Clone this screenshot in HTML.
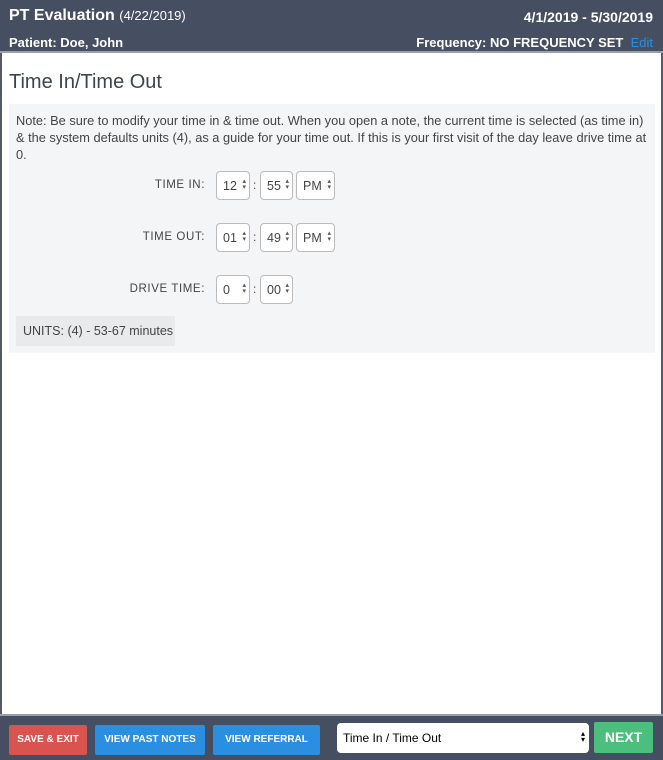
<!DOCTYPE html>
<html><head><style>
*{box-sizing:border-box;margin:0;padding:0}
body{width:663px;height:760px;overflow:hidden;background:#fff;font-family:"Liberation Sans",sans-serif;position:relative}
.bl{position:absolute;top:0;width:2px;height:760px;background:#555b66}
.hdr{position:absolute;left:0;top:0;width:663px;height:53px;background:#464e62;color:#fff;border-bottom:2px solid #9aa0aa}
.t{position:absolute;font-size:14px;font-weight:bold}
h1{position:absolute;left:9px;top:71px;font-size:20px;font-weight:normal;color:#3d4350}
.note{position:absolute;left:9px;top:104px;width:646px;height:249px;background:#f4f5f7}
.note p{position:absolute;left:7px;top:8px;width:632px;font-size:12.8px;line-height:17px;color:#444}
.lbl{position:absolute;font-size:11.5px;letter-spacing:.6px;color:#444;text-align:right;width:120px}
.sel{position:absolute;height:29px;border:1px solid #bbb;border-radius:4px;background:#fff;font-size:12.5px;color:#444;padding:7px 0 0 6px}
.sel:after{content:"\25B4\A\25BE";white-space:pre;position:absolute;right:3px;top:7px;font-size:7px;line-height:6px;color:#555}
.col{position:absolute;font-size:12px;color:#444}
.units{position:absolute;left:16px;top:316px;width:159px;height:30px;background:#e9eaec;font-size:12.5px;color:#444;padding:8px 0 0 7px}
.ftr{position:absolute;left:0;top:714px;width:663px;height:46px;background:#464e62;border-top:2px solid #9aa0aa}
.b{position:absolute;top:9px;height:30px;color:#fff;font-size:10px;font-weight:bold;text-align:center;line-height:30px;border-radius:2px}
</style></head><body>
<div class="bl" style="left:0"></div><div class="bl" style="right:0"></div>
<div class="hdr">
<div class="t" style="left:9px;top:7px;font-size:16px">PT Evaluation <span style="font-size:13px;font-weight:normal">(4/22/2019)</span></div>
<div class="t" style="right:10px;top:9px">4/1/2019 - 5/30/2019</div>
<div class="t" style="left:9px;top:35px;font-size:13px">Patient: Doe, John</div>
<div class="t" style="right:10px;top:35px;font-size:13px">Frequency: NO FREQUENCY SET &nbsp;<span style="color:#2d8fe0;font-weight:normal">Edit</span></div>
</div>
<h1>Time In/Time Out</h1>
<div class="note"><p>Note: Be sure to modify your time in &amp; time out. When you open a note, the current time is selected (as time in) &amp; the system defaults units (4), as a guide for your time out. If this is your first visit of the day leave drive time at 0.</p></div>
<div class="lbl" style="left:85px;top:179px">TIME IN:</div>
<div class="sel" style="left:216px;top:171px;width:34px">12</div><div class="col" style="left:253px;top:178px">:</div>
<div class="sel" style="left:260px;top:171px;width:33px">55</div>
<div class="sel" style="left:296px;top:171px;width:39px">PM</div>
<div class="lbl" style="left:85px;top:231px">TIME OUT:</div>
<div class="sel" style="left:216px;top:223px;width:34px">01</div><div class="col" style="left:253px;top:230px">:</div>
<div class="sel" style="left:260px;top:223px;width:33px">49</div>
<div class="sel" style="left:296px;top:223px;width:39px">PM</div>
<div class="lbl" style="left:85px;top:283px">DRIVE TIME:</div>
<div class="sel" style="left:216px;top:275px;width:34px">0</div><div class="col" style="left:253px;top:282px">:</div>
<div class="sel" style="left:260px;top:275px;width:33px">00</div>
<div class="units">UNITS: (4) - 53-67 minutes</div>
<div class="ftr">
<div class="b" style="left:9px;width:78px;background:#d9534f">SAVE &amp; EXIT</div>
<div class="b" style="left:95px;width:110px;background:#2a8fe0">VIEW PAST NOTES</div>
<div class="b" style="left:213px;width:107px;background:#2a8fe0">VIEW REFERRAL</div>
<div style="position:absolute;left:337px;top:7px;width:252px;height:30px;background:#fff;border-radius:4px;font-size:12px;padding:8px 0 0 6px;color:#000">Time In / Time Out<span style="position:absolute;right:4px;top:8px;font-size:8px;line-height:6px">▴<br>▾</span></div>
<div class="b" style="left:594px;top:6px;width:59px;height:31px;background:#4cbf7f;font-size:14px;line-height:30px">NEXT</div>
</div>
</body></html>
